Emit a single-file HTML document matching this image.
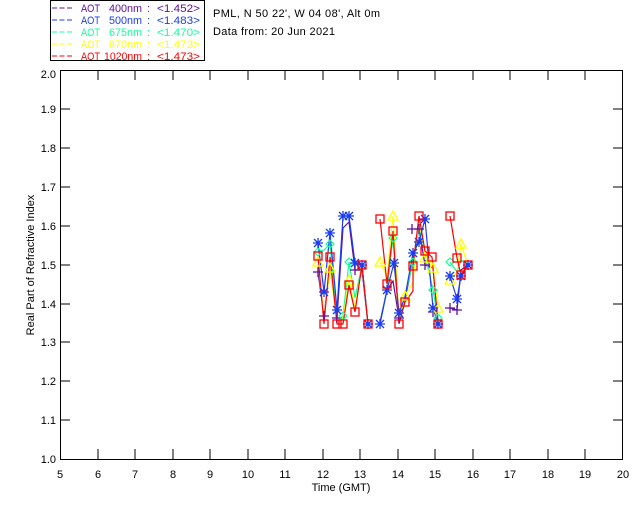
<!DOCTYPE html><html><head><style>body{margin:0;background:#fff}svg{display:block}text{font-family:"Liberation Sans",sans-serif;font-size:11px}</style></head><body>
<svg width="640" height="512" xmlns="http://www.w3.org/2000/svg">
<defs>
<g id="sq"><rect x="-4" y="-4" width="8" height="8" fill="none" stroke="#f00" stroke-width="1.3"/></g>
<g id="st" stroke="#1a3cf0" stroke-width="1.3"><path d="M-5 0H5M0-5V5M-4-4L4 4M-4 4L4-4"/></g>
<g id="tr"><path d="M0-5L5 4H-5Z" fill="none" stroke="#ff0" stroke-width="1.3"/></g>
<g id="dm"><path d="M0-4L4 0 0 4-4 0Z" fill="none" stroke="#1f9" stroke-width="1.2"/></g>
<g id="pl"><path d="M-5 0H5M0-5V5" stroke="#6010a0" stroke-width="1.3"/></g>
</defs>
<rect x="50.5" y="0.5" width="154" height="60" fill="none" stroke="#000"/>
<g font-size="12">
<g fill="#6010a0"><path d="M52 8h20" stroke="#6010a0" stroke-dasharray="5 2.5"/><text x="81" y="12" textLength="19" lengthAdjust="spacingAndGlyphs">AOT</text><text x="109" y="12" textLength="33" lengthAdjust="spacingAndGlyphs">400nm</text><text x="147" y="12">:</text><text x="157" y="12" textLength="43" lengthAdjust="spacingAndGlyphs">&lt;1.452&gt;</text></g>
<g fill="#1a3cf0"><path d="M52 20h20" stroke="#1a3cf0" stroke-dasharray="5 2.5"/><text x="81" y="24" textLength="19" lengthAdjust="spacingAndGlyphs">AOT</text><text x="109" y="24" textLength="33" lengthAdjust="spacingAndGlyphs">500nm</text><text x="147" y="24">:</text><text x="157" y="24" textLength="43" lengthAdjust="spacingAndGlyphs">&lt;1.483&gt;</text></g>
<g fill="#1f9"><path d="M52 32h20" stroke="#1f9" stroke-dasharray="5 2.5"/><text x="81" y="36" textLength="19" lengthAdjust="spacingAndGlyphs">AOT</text><text x="109" y="36" textLength="33" lengthAdjust="spacingAndGlyphs">675nm</text><text x="147" y="36">:</text><text x="157" y="36" textLength="43" lengthAdjust="spacingAndGlyphs">&lt;1.470&gt;</text></g>
<g fill="#ff0"><path d="M52 44h20" stroke="#ff0" stroke-dasharray="5 2.5"/><text x="81" y="48" textLength="19" lengthAdjust="spacingAndGlyphs">AOT</text><text x="109" y="48" textLength="33" lengthAdjust="spacingAndGlyphs">870nm</text><text x="147" y="48">:</text><text x="157" y="48" textLength="43" lengthAdjust="spacingAndGlyphs">&lt;1.473&gt;</text></g>
<g fill="#f00"><path d="M52 56h20" stroke="#f00" stroke-dasharray="5 2.5"/><text x="81" y="60" textLength="19" lengthAdjust="spacingAndGlyphs">AOT</text><text x="104" y="60" textLength="38" lengthAdjust="spacingAndGlyphs">1020nm</text><text x="147" y="60">:</text><text x="157" y="60" textLength="43" lengthAdjust="spacingAndGlyphs">&lt;1.473&gt;</text></g>
<text x="213" y="17" textLength="167" lengthAdjust="spacing">PML, N 50 22', W 04 08', Alt 0m</text>
<text x="213" y="35" textLength="122" lengthAdjust="spacing">Data from: 20 Jun 2021</text>
</g>
<rect x="60.5" y="70.5" width="562" height="389" fill="none" stroke="#000"/>
<g stroke="#000">
<path d="M60 109h10M60 148h10M60 187h10M60 226h10M60 265h10M60 304h10M60 342h10M60 381h10M60 420h10M623 109h-10M623 148h-10M623 187h-10M623 226h-10M623 265h-10M623 304h-10M623 342h-10M623 381h-10M623 420h-10"/>
<path d="M98 459v-10M135 459v-10M173 459v-10M210 459v-10M248 459v-10M285 459v-10M323 459v-10M360 459v-10M398 459v-10M435 459v-10M473 459v-10M510 459v-10M548 459v-10M585 459v-10M98 70v10M135 70v10M173 70v10M210 70v10M248 70v10M285 70v10M323 70v10M360 70v10M398 70v10M435 70v10M473 70v10M510 70v10M548 70v10M585 70v10"/>
</g>
<g text-anchor="end">
<text x="56" y="78">2.0</text><text x="56" y="113">1.9</text><text x="56" y="152">1.8</text><text x="56" y="191">1.7</text><text x="56" y="230">1.6</text><text x="56" y="269">1.5</text><text x="56" y="308">1.4</text><text x="56" y="346">1.3</text><text x="56" y="385">1.2</text><text x="56" y="424">1.1</text><text x="56" y="463">1.0</text>
</g>
<g text-anchor="middle">
<text x="60" y="478">5</text><text x="98" y="478">6</text><text x="135" y="478">7</text><text x="173" y="478">8</text><text x="210" y="478">9</text><text x="248" y="478">10</text><text x="285" y="478">11</text><text x="323" y="478">12</text><text x="360" y="478">13</text><text x="398" y="478">14</text><text x="435" y="478">15</text><text x="473" y="478">16</text><text x="510" y="478">17</text><text x="548" y="478">18</text><text x="585" y="478">19</text><text x="623" y="478">20</text>
<text x="341" y="491">Time (GMT)</text>
<text transform="translate(34,265) rotate(-90)">Real Part of Refractive Index</text>
</g>
<g fill="none" stroke-width="1.2">
<polyline stroke="#6010a0" points="318,272 324,316 330,268 337,318 343,228 349,222 355,270 362,270 368,324"/>
<polyline stroke="#6010a0" points="380,322 387,290 393,281 399,318 405,300 413,260 419,229 425,265 433,268 438,320"/>
<polyline stroke="#6010a0" points="450,308 457,310 461,270 468,265"/>
<polyline stroke="#1f9" points="318,252 324,250 330,244 337,322 343,316 349,262 355,298 362,265 368,324"/>
<polyline stroke="#1f9" points="380,324 387,290 393,238 399,322 405,296 413,262 419,228 425,255 433,290 438,318"/>
<polyline stroke="#1f9" points="450,262 457,272 461,260 468,265"/>
<polyline stroke="#ff0" points="318,262 324,318 330,268 337,322 343,318 349,280 355,308 362,265 368,324"/>
<polyline stroke="#ff0" points="380,262 387,276 393,216 399,318 405,296 413,282 419,218 425,258 433,268 438,308"/>
<polyline stroke="#ff0" points="450,280 457,272 461,244 468,265"/>
<polyline stroke="#1a3cf0" points="318,243 324,292 330,233 337,310 343,216 349,216 355,263 362,265 368,324"/>
<polyline stroke="#1a3cf0" points="380,324 387,290 394,263 399,313 405,297 413,253 419,242 425,219 433,308 438,324"/>
<polyline stroke="#1a3cf0" points="450,276 457,299 461,276 468,265"/>
<polyline stroke="#f00" points="318,256 324,324 330,257 337,324 343,324 349,285 355,312 362,265 368,324"/>
<polyline stroke="#f00" points="380,219 387,284 393,231 399,324 405,302 413,291 413,266 419,216 425,251 432,257 438,324"/>
<polyline stroke="#f00" points="450,216 457,258 461,275 468,265"/>
</g>
<g>
<use href="#pl" x="318" y="272"/><use href="#pl" x="324" y="316"/><use href="#pl" x="337" y="318"/><use href="#pl" x="355" y="270"/><use href="#pl" x="412" y="229"/><use href="#pl" x="419" y="229"/><use href="#pl" x="425" y="265"/><use href="#pl" x="399" y="318"/><use href="#pl" x="450" y="308"/><use href="#pl" x="457" y="310"/><use href="#pl" x="433" y="312"/>
<use href="#dm" x="318" y="252"/><use href="#dm" x="330" y="244"/><use href="#dm" x="349" y="262"/><use href="#dm" x="393" y="238"/><use href="#dm" x="413" y="262"/><use href="#dm" x="450" y="262"/><use href="#dm" x="343" y="316"/><use href="#dm" x="433" y="290"/><use href="#dm" x="438" y="318"/>
<use href="#tr" x="318" y="262"/><use href="#tr" x="330" y="268"/><use href="#tr" x="349" y="280"/><use href="#tr" x="380" y="262"/><use href="#tr" x="393" y="216"/><use href="#tr" x="425" y="258"/><use href="#tr" x="433" y="268"/><use href="#tr" x="438" y="308"/><use href="#tr" x="461" y="244"/><use href="#tr" x="450" y="280"/><use href="#tr" x="405" y="296"/>
<use href="#st" x="318" y="243"/><use href="#st" x="324" y="292"/><use href="#st" x="330" y="233"/><use href="#st" x="337" y="310"/><use href="#st" x="343" y="216"/><use href="#st" x="349" y="216"/><use href="#st" x="355" y="263"/><use href="#st" x="362" y="265"/><use href="#st" x="380" y="324"/><use href="#st" x="387" y="290"/><use href="#st" x="394" y="263"/><use href="#st" x="399" y="313"/><use href="#st" x="413" y="253"/><use href="#st" x="419" y="242"/><use href="#st" x="425" y="219"/><use href="#st" x="433" y="308"/><use href="#st" x="438" y="324"/><use href="#st" x="450" y="276"/><use href="#st" x="457" y="299"/><use href="#st" x="461" y="276"/><use href="#st" x="468" y="265"/><use href="#st" x="368" y="324"/>
<use href="#sq" x="318" y="256"/><use href="#sq" x="324" y="324"/><use href="#sq" x="330" y="257"/><use href="#sq" x="337" y="324"/><use href="#sq" x="343" y="324"/><use href="#sq" x="349" y="285"/><use href="#sq" x="355" y="312"/><use href="#sq" x="362" y="265"/><use href="#sq" x="368" y="324"/><use href="#sq" x="380" y="219"/><use href="#sq" x="387" y="284"/><use href="#sq" x="393" y="231"/><use href="#sq" x="399" y="324"/><use href="#sq" x="405" y="302"/><use href="#sq" x="413" y="266"/><use href="#sq" x="419" y="216"/><use href="#sq" x="425" y="251"/><use href="#sq" x="432" y="257"/><use href="#sq" x="438" y="324"/><use href="#sq" x="450" y="216"/><use href="#sq" x="457" y="258"/><use href="#sq" x="461" y="275"/><use href="#sq" x="468" y="265"/>
</g>
</svg>
</body></html>
